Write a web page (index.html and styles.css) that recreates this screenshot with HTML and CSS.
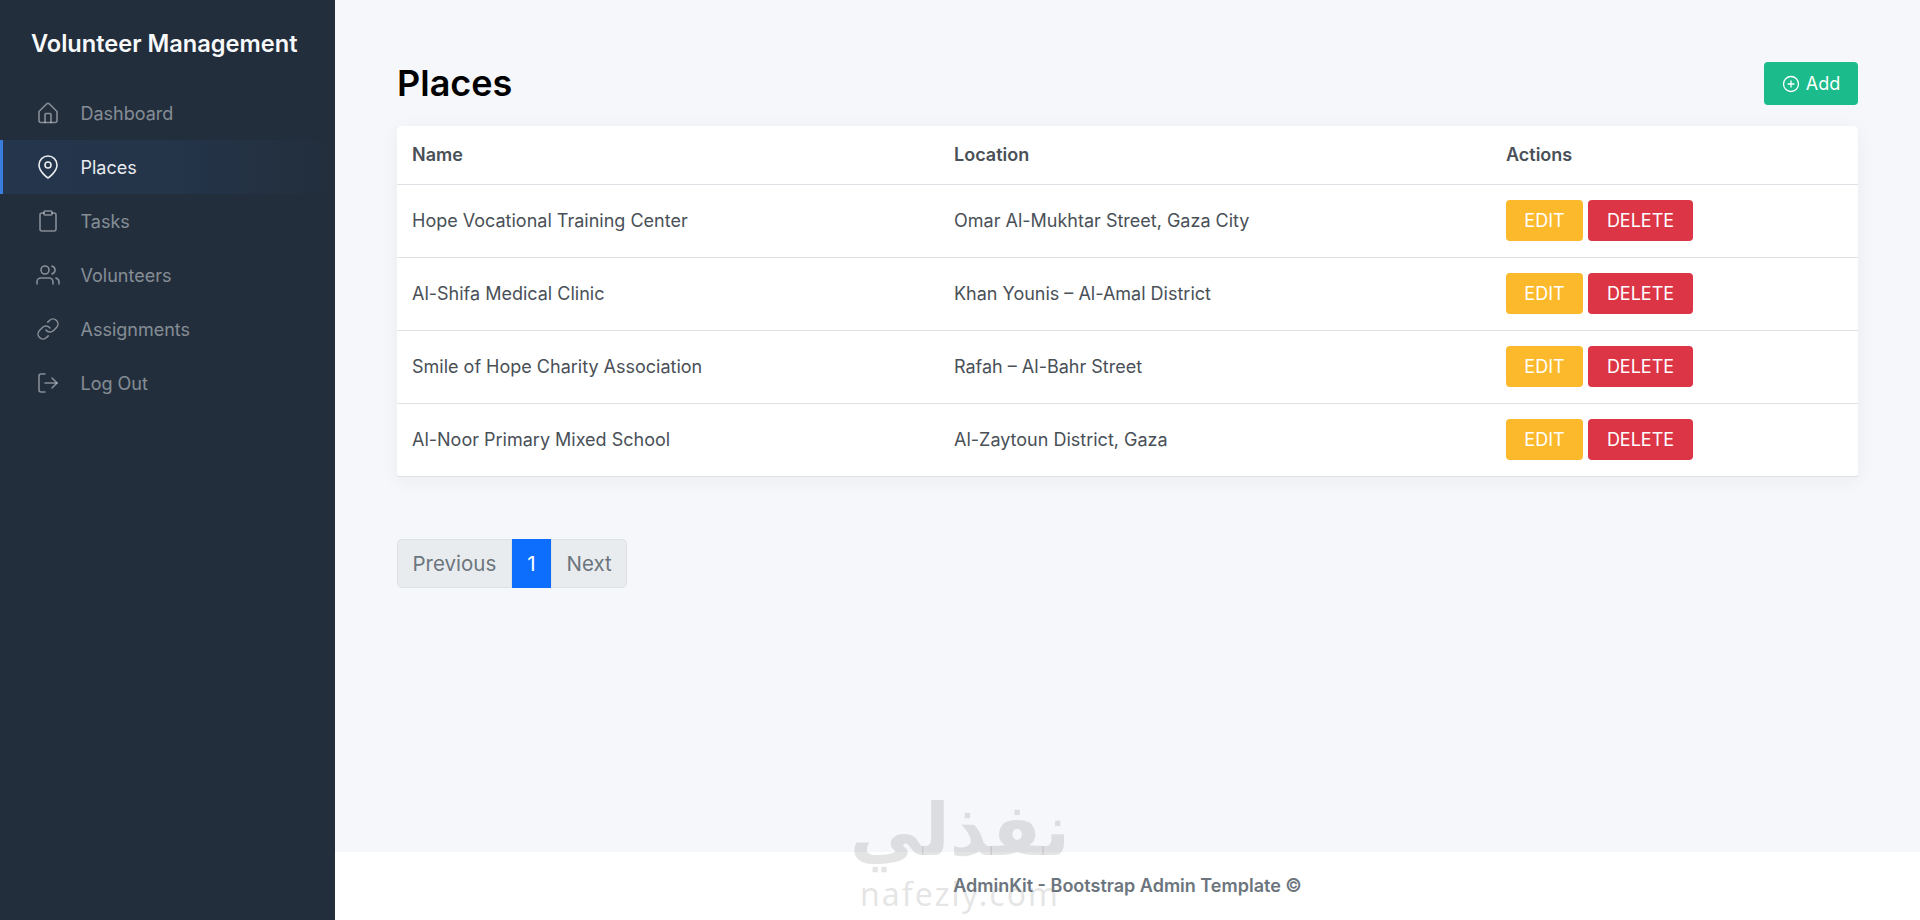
FILE: index.html
```html
<!DOCTYPE html>
<html lang="en">
<head>
    <meta charset="UTF-8">
    <meta name="viewport" content="width=device-width, initial-scale=1.0">
    <title>Places</title>
    <link rel="stylesheet" href="styles.css">
</head>
<body>
    <aside class="sidebar">
        <div class="brand">Volunteer Management</div>
        <ul class="side-nav">
            <li class="side-item">
                <svg class="side-icon" viewBox="0 0 24 24"><path d="M3 10.500 10.500 3a2.200 2.200 0 0 1 3 0L21 10.500V19.500a2 2 0 0 1-2 2H5a2 2 0 0 1-2-2z"/><path d="M9 21.500V13.500a1 1 0 0 1 1-1h4a1 1 0 0 1 1 1v8"/></svg>
                Dashboard
            </li>
            <li class="side-item active">
                <svg class="side-icon" viewBox="0 0 24 24"><path d="M21 10c0 7-9 13-9 13s-9-6-9-13a9 9 0 0 1 18 0z"/><circle cx="12" cy="10" r="3"/></svg>
                Places
            </li>
            <li class="side-item">
                <svg class="side-icon" viewBox="0 0 24 24"><path d="M16 4h2a2 2 0 0 1 2 2v14a2 2 0 0 1-2 2H6a2 2 0 0 1-2-2V6a2 2 0 0 1 2-2h2"/><rect x="8" y="2" width="8" height="4" rx="1"/></svg>
                Tasks
            </li>
            <li class="side-item">
                <svg class="side-icon" viewBox="0 0 24 24"><path d="M17 21v-2a4 4 0 0 0-4-4H5a4 4 0 0 0-4 4v2"/><circle cx="9" cy="7" r="4"/><path d="M23 21v-2a4 4 0 0 0-3-3.870"/><path d="M16 3.130a4 4 0 0 1 0 7.750"/></svg>
                Volunteers
            </li>
            <li class="side-item">
                <svg class="side-icon" viewBox="0 0 24 24"><path d="M10 13a5 5 0 0 0 7.540.54l3-3a5 5 0 0 0-7.070-7.070l-1.720 1.710"/><path d="M14 11a5 5 0 0 0-7.540-.54l-3 3a5 5 0 0 0 7.070 7.070l1.710-1.710"/></svg>
                Assignments
            </li>
            <li class="side-item">
                <svg class="side-icon" viewBox="0 0 24 24"><path d="M9 21H5a2 2 0 0 1-2-2V5a2 2 0 0 1 2-2h4"/><path d="M16 17l5-5-5-5"/><path d="M21 12H9"/></svg>
                Log Out
            </li>
        </ul>
    </aside>

    <div class="main">
        <main class="content">
            <div class="page-head">
                <h1>Places</h1>
                <button class="btn btn-add">
                    <svg class="add-icon" viewBox="0 0 24 24"><circle cx="12" cy="12" r="10"/><path d="M12 8v8"/><path d="M8 12h8"/></svg>
                    Add
                </button>
            </div>

            <div class="card">
                <table>
                    <thead>
                        <tr><th class="col-name">Name</th><th class="col-location">Location</th><th>Actions</th></tr>
                    </thead>
                    <tbody>
                        <tr>
                            <td>Hope Vocational Training Center</td>
                            <td>Omar Al-Mukhtar Street, Gaza City</td>
                            <td><button class="btn btn-edit">EDIT</button><button class="btn btn-delete">DELETE</button></td>
                        </tr>
                        <tr>
                            <td>Al-Shifa Medical Clinic</td>
                            <td>Khan Younis – Al-Amal District</td>
                            <td><button class="btn btn-edit">EDIT</button><button class="btn btn-delete">DELETE</button></td>
                        </tr>
                        <tr>
                            <td>Smile of Hope Charity Association</td>
                            <td>Rafah – Al-Bahr Street</td>
                            <td><button class="btn btn-edit">EDIT</button><button class="btn btn-delete">DELETE</button></td>
                        </tr>
                        <tr>
                            <td>Al-Noor Primary Mixed School</td>
                            <td>Al-Zaytoun District, Gaza</td>
                            <td><button class="btn btn-edit">EDIT</button><button class="btn btn-delete">DELETE</button></td>
                        </tr>
                    </tbody>
                </table>
            </div>

            <ul class="pagination">
                <li class="page-link">Previous</li>
                <li class="page-link current">1</li>
                <li class="page-link">Next</li>
            </ul>
        </main>

        <footer class="footer">AdminKit - Bootstrap Admin Template ©</footer>
    </div>

    <div class="watermark">
        <div class="watermark-ar" lang="ar" dir="rtl">نفذلي</div>
        <div class="watermark-en">nafezly.com</div>
    </div>
</body>
</html>
```

FILE: styles.css
```css
* {
    margin: 0;
    padding: 0;
    box-sizing: border-box;
}

body {
    display: flex;
    height: 920px;
    overflow: hidden;
    font-family: Inter, "Liberation Sans", sans-serif;
    font-size: 18px;
    color: #495057;
    background-color: #f5f7fb;
}

.sidebar {
    width: 335px;
    flex-shrink: 0;
    background-color: #222e3c;
}

.brand {
    padding: 29px 0 0 31px;
    height: 86px;
    font-size: 23.6px;
    font-weight: 600;
    line-height: 29px;
    color: #f8f9fa;
}

.side-nav {
    list-style: none;
}

.side-item {
    display: flex;
    align-items: center;
    gap: 20.5px;
    height: 54px;
    padding-left: 36px;
    color: rgba(233, 236, 239, 0.5);
}

.side-item.active {
    padding-left: 33px;
    border-left: 3px solid #3b7ddd;
    color: #e9ecef;
    background: linear-gradient(90deg, rgba(59, 125, 221, 0.1), rgba(59, 125, 221, 0.0875) 50%, rgba(0, 0, 0, 0));
}

.side-icon {
    width: 24px;
    height: 24px;
    fill: none;
    stroke: currentColor;
    stroke-width: 1.6;
    stroke-linecap: round;
    stroke-linejoin: round;
}

.main {
    flex: 1;
    display: flex;
    flex-direction: column;
}

.content {
    flex: 1;
    padding: 62px 62px 0;
}

.page-head {
    display: flex;
    justify-content: space-between;
    align-items: flex-start;
    height: 64px;
}

h1 {
    font-size: 36px;
    font-weight: 600;
    line-height: 43px;
    color: #000;
}

.btn {
    border: none;
    border-radius: 4px;
    color: #fff;
    font-family: inherit;
    font-size: 18px;
    height: 41px;
}

.btn-add {
    display: flex;
    align-items: center;
    justify-content: center;
    gap: 6px;
    width: 94px;
    height: 43px;
    background-color: #1cbb8c;
}

.add-icon {
    width: 18px;
    height: 18px;
    fill: none;
    stroke: #fff;
    stroke-width: 1.7;
    stroke-linecap: round;
}

.card {
    background-color: #fff;
    border-radius: 5px;
    box-shadow: 0 4px 20px rgba(33, 37, 41, 0.05);
}

table {
    width: 100%;
    border-collapse: collapse;
    table-layout: fixed;
}

th {
    height: 58px;
    padding: 0 15px;
    text-align: left;
    font-weight: 600;
    border-bottom: 1px solid #dee2e6;
}

td {
    height: 73px;
    padding: 0 15px;
    border-bottom: 1px solid #dee2e6;
}

.col-name {
    width: 542px;
}

.col-location {
    width: 552px;
}

.btn-edit {
    width: 77px;
    margin-right: 5px;
    background-color: #fcb92c;
}

.btn-delete {
    width: 105px;
    background-color: #dc3545;
}

.pagination {
    display: flex;
    list-style: none;
    width: fit-content;
    margin-top: 62px;
    font-size: 20.5px;
}

.page-link {
    height: 49px;
    padding: 0 14.5px;
    line-height: 47px;
    color: #6c757d;
    background-color: #e9ecef;
    border: 1px solid #dee2e6;
}

.page-link:first-child {
    border-radius: 5px 0 0 5px;
}

.page-link:last-child {
    border-radius: 0 5px 5px 0;
}

.page-link.current {
    color: #fff;
    background-color: #0d6efd;
    border-color: #0d6efd;
}

.footer {
    height: 68px;
    padding-top: 23px;
    text-align: center;
    background-color: #fff;
    color: #6c757d;
    font-weight: 600;
}

/* site watermark lies over the footer */
.watermark {
    position: absolute;
    left: 840px;
    top: 786px;
    width: 240px;
    text-align: center;
    color: rgba(120, 120, 120, 0.2);
    pointer-events: none;
}

.watermark-ar {
    font-family: "DejaVu Sans", sans-serif;
    font-size: 72px;
    font-weight: 700;
    line-height: 88px;
}

.watermark-en {
    font-family: "Noto Sans", sans-serif;
    font-size: 32px;
    line-height: 40px;
    letter-spacing: 2px;
}
```
